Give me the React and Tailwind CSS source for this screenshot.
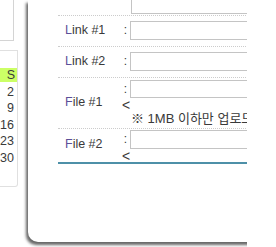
export default function App() {
  const calNums = ["2", "9", "16", "23", "30"];
  return (
    <div className="relative w-[276px] h-[247px] overflow-hidden bg-white font-['Liberation_Sans','Noto_Sans_CJK_KR',sans-serif] text-[12px] text-[#3a3a3a]">
      <div className="relative w-[247px] h-[247px] overflow-hidden">
        {/* background page */}
        <div className="flex flex-col w-[28px]">
          <div className="w-[14px] h-[41px] border-r border-b border-[#d4d4d4]"></div>
          <div className="mt-[9px] w-[18px] h-[137px] border-t border-r border-b border-[#e0e0e0] rounded-br-[3px] flex flex-col items-end pt-[17px] text-[12.5px]">
            <div className="w-full h-[14px] bg-[#ccff66] text-right pr-[2px] leading-[14px]">S</div>
            {calNums.map((n) => (
              <div key={n} className="w-full h-[16.4px] text-right pr-[3px] leading-[16px] pt-[2px]">{n}</div>
            ))}
          </div>
        </div>

        {/* popup */}
        <div className="absolute left-[28px] top-0 w-[240px] h-[242px] bg-white rounded-bl-[10px] shadow-[-2px_3px_3px_rgba(0,0,0,0.6)] pl-[30px]">
          <div className="flex flex-col">
            {/* row 0 */}
            <div className="flex h-[16px] border-b border-dotted border-[#cccccc]">
              <div className="w-[63px]"></div>
              <div className="flex-1 pl-[10px]">
                <div className="h-[14px] border-l border-b border-[#c4c4c4]"></div>
              </div>
            </div>
            {/* Link #1 */}
            <div className="flex h-[31px] border-b border-dotted border-[#cccccc]">
              <div className="w-[63px] pl-[7px] flex items-center pb-[2px] text-[12.5px]">
                <span className="text-[#5b4f98]">L</span>ink #1
              </div>
              <div className="flex-1 flex items-start pt-[5px]">
                <span className="w-[9px] text-center leading-[19px]">:</span>
                <div className="flex-1 h-[19px] border border-[#c4c4c4]"></div>
              </div>
            </div>
            {/* Link #2 */}
            <div className="flex h-[31px] border-b border-dotted border-[#cccccc]">
              <div className="w-[63px] pl-[7px] flex items-center pb-[2px] text-[12.5px]">
                <span className="text-[#5b4f98]">L</span>ink #2
              </div>
              <div className="flex-1 flex items-start pt-[5px]">
                <span className="w-[9px] text-center leading-[19px]">:</span>
                <div className="flex-1 h-[19px] border border-[#c4c4c4]"></div>
              </div>
            </div>
            {/* File #1 */}
            <div className="flex h-[51px] border-b border-dotted border-[#cccccc]">
              <div className="w-[63px] pl-[7px] flex items-center pb-[2px] text-[12.5px]">
                <span className="text-[#5b4f98]">F</span>ile #1
              </div>
              <div className="flex-1 flex flex-col pt-[2px]">
                <div className="flex items-start">
                  <span className="w-[9px] text-center leading-[18px]">:</span>
                  <div className="flex-1 h-[18px] border border-[#c4c4c4]"></div>
                </div>
                <div className="leading-[14px] pl-[1px] text-[14px] font-light">&lt;</div>
                <div className="leading-[14px] pl-[10px] whitespace-nowrap text-[13px]">※ 1MB 이하만 업로드</div>
              </div>
            </div>
            {/* File #2 */}
            <div className="flex h-[35px] border-b-2 border-[#4d90a8]">
              <div className="w-[63px] pl-[7px] flex items-center pb-[2px] text-[12.5px]">
                <span className="text-[#5b4f98]">F</span>ile #2
              </div>
              <div className="flex-1 flex flex-col pt-[1px]">
                <div className="flex items-start">
                  <span className="w-[9px] text-center leading-[19px]">:</span>
                  <div className="flex-1 h-[19px] border border-[#c4c4c4]"></div>
                </div>
                <div className="leading-[14px] pl-[1px] text-[14px] font-light">&lt;</div>
              </div>
            </div>
          </div>
        </div>
      </div>
    </div>
  );
}
